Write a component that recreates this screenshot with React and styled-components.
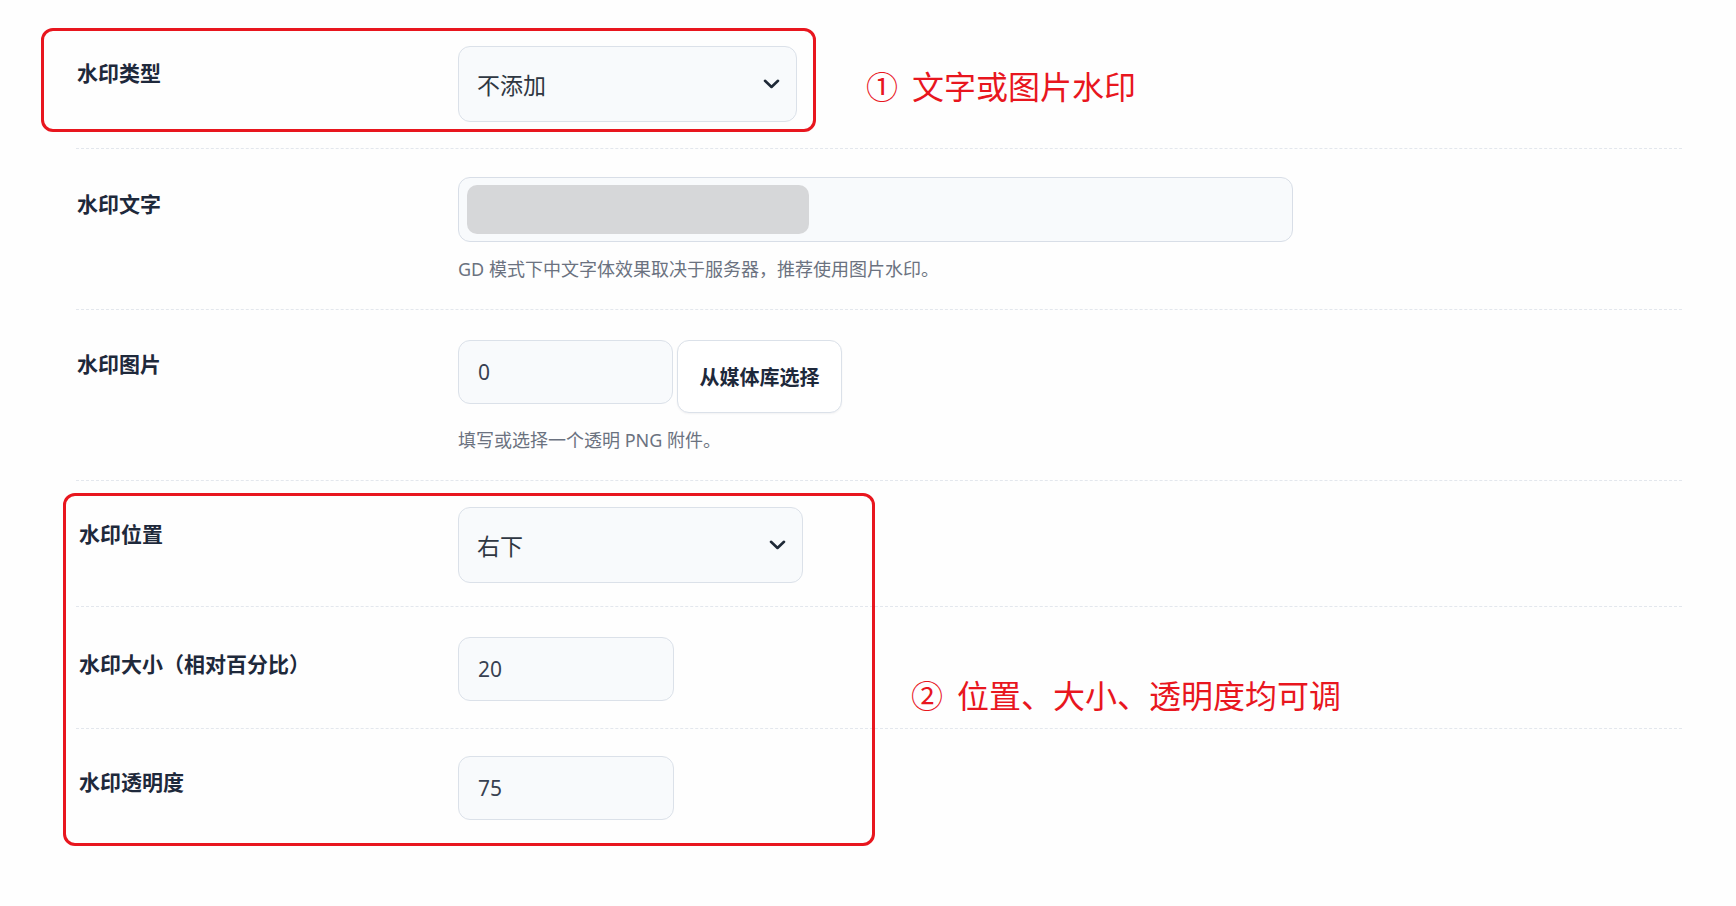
import React from "react";
import styled, { createGlobalStyle } from "styled-components";

const Global = createGlobalStyle`
  html, body { margin: 0; padding: 0; background: #fefefe; }
  body { font-family: "Noto Sans", "Noto Sans CJK SC", sans-serif; }
  * { box-sizing: border-box; }
`;

const Form = styled.div`
  position: relative;
  width: 1736px;
  min-height: 906px;
  padding: 18px 54px 40px 76px;
`;

const Rows = styled.div`
  display: flex;
  flex-direction: column;
`;

const Row = styled.div`
  display: grid;
  grid-template-columns: 382px 1fr;
  padding: ${(p) => p.$pt}px 0 ${(p) => p.$pb}px;
  border-bottom: 1px dashed #e3e7ed;
  &:last-child { border-bottom: none; }
`;

const Label = styled.div`
  font-family: "Noto Sans", "Noto Sans CJK SC", sans-serif;
  font-weight: 700;
  font-size: 21px;
  line-height: 30px;
  padding-top: ${(p) => (p.$top != null ? p.$top : 12)}px;
  padding-left: ${(p) => p.$indent || 1}px;
  color: #1e293b;
`;

const Field = styled.div`
  display: flex;
  flex-direction: column;
  align-items: flex-start;
`;

const Inline = styled.div`
  display: flex;
  align-items: flex-start;
  gap: 4px;
`;

const SelectBox = styled.div`
  width: ${(p) => p.$w}px;
  height: 76px;
  display: flex;
  align-items: center;
  justify-content: space-between;
  padding: 0 16px 0 18px;
  border: 1.5px solid #dbe1e9;
  border-radius: 12px;
  background: #f8fafc;
  font-size: 23px;
  color: #2f3742;
`;

const TextBox = styled.div`
  width: ${(p) => p.$w}px;
  height: 65px;
  display: flex;
  align-items: center;
  padding: 0 8px;
  border: 1.5px solid #d8dee7;
  border-radius: 12px;
  background: #f8fafc;
`;

const Redacted = styled.span`
  display: block;
  width: 342px;
  height: 49px;
  border-radius: 10px;
  background: #d6d7d9;
`;

const NumInput = styled.input`
  width: ${(p) => p.$w}px;
  height: 64px;
  padding: 0 19px;
  border: 1.5px solid #dbe1e9;
  border-radius: 12px;
  background: #f8fafc;
  font-family: "Noto Sans", "Noto Sans CJK SC", sans-serif;
  font-size: 21px;
  color: #374151;
  outline: none;
`;

const MediaButton = styled.button`
  width: 165px;
  height: 73px;
  border: 1.5px solid #dbe1e9;
  border-radius: 12px;
  background: #ffffff;
  box-shadow: 0 1px 2px rgba(15, 23, 42, 0.05);
  font-family: "Noto Sans", "Noto Sans CJK SC", sans-serif;
  font-weight: 700;
  font-size: 20px;
  color: #1e293b;
  padding: 0;
`;

const Help = styled.div`
  margin-top: 15px;
  font-size: 18px;
  line-height: 24px;
  color: #6b7280;
`;

const Callout = styled.div`
  position: absolute;
  left: ${(p) => p.$x}px;
  top: ${(p) => p.$y}px;
  width: ${(p) => p.$w}px;
  height: ${(p) => p.$h}px;
  border: 3px solid #e8161e;
  border-radius: 12px;
  pointer-events: none;
`;

const Note = styled.div`
  position: absolute;
  left: ${(p) => p.$x}px;
  top: ${(p) => p.$y}px;
  display: flex;
  align-items: center;
  font-family: "Noto Sans CJK SC", "Noto Sans", sans-serif;
  font-size: 32px;
  line-height: 38px;
  color: #e8161e;
  white-space: nowrap;
`;

const Num = styled.span`
  margin-right: 14px;
`;

const Chevron = () => (
  <svg width="17" height="10" viewBox="0 0 17 10" fill="none">
    <path d="M2 1.8 L8.5 8 L15 1.8" stroke="#1f2937" strokeWidth="2.6" strokeLinecap="round" strokeLinejoin="round" />
  </svg>
);

export default function App() {
  return (
    <>
      <Global />
      <Form>
        <Rows>
          <Row $pt={28} $pb={26}>
            <Label>水印类型</Label>
            <Field>
              <SelectBox $w={339}>
                <span>不添加</span>
                <Chevron />
              </SelectBox>
            </Field>
          </Row>
          <Row $pt={28} $pb={28}>
            <Label>水印文字</Label>
            <Field>
              <TextBox $w={835}>
                <Redacted />
              </TextBox>
              <Help>GD 模式下中文字体效果取决于服务器，推荐使用图片水印。</Help>
            </Field>
          </Row>
          <Row $pt={30} $pb={28}>
            <Label $top={9}>水印图片</Label>
            <Field>
              <Inline>
                <NumInput $w={215} readOnly defaultValue="0" />
                <MediaButton type="button">从媒体库选择</MediaButton>
              </Inline>
              <Help>填写或选择一个透明 PNG 附件。</Help>
            </Field>
          </Row>
          <Row $pt={26} $pb={23}>
            <Label $indent={3}>水印位置</Label>
            <Field>
              <SelectBox $w={345}>
                <span>右下</span>
                <Chevron />
              </SelectBox>
            </Field>
          </Row>
          <Row $pt={30} $pb={27}>
            <Label $indent={3}>水印大小（相对百分比）</Label>
            <Field>
              <NumInput $w={216} readOnly defaultValue="20" />
            </Field>
          </Row>
          <Row $pt={27} $pb={20}>
            <Label $indent={3} $top={11}>水印透明度</Label>
            <Field>
              <NumInput $w={216} readOnly defaultValue="75" />
            </Field>
          </Row>
        </Rows>
        <Callout $x={41} $y={28} $w={775} $h={104} />
        <Note $x={866} $y={66}>
          <Num>①</Num>文字或图片水印
        </Note>
        <Callout $x={63} $y={493} $w={812} $h={353} />
        <Note $x={911} $y={675}>
          <Num>②</Num>位置、大小、透明度均可调
        </Note>
      </Form>
    </>
  );
}
